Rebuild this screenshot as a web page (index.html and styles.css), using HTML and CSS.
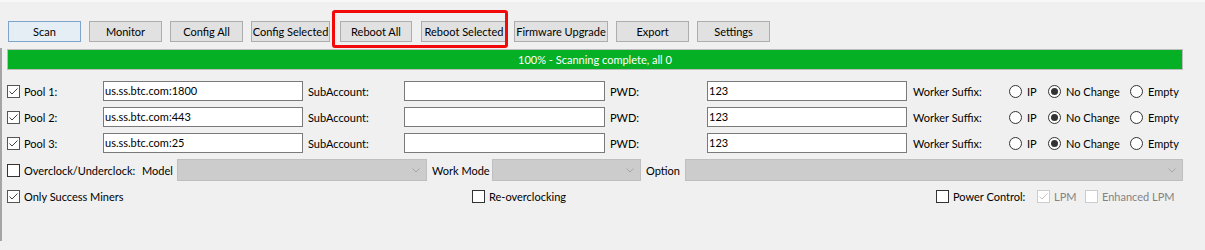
FILE: index.html
```html
<!DOCTYPE html>
<html>
<head>
<meta charset="utf-8">
<link rel="stylesheet" href="styles.css">
</head>
<body>
<div class="topline"></div>
<div class="toolbar">
  <button class="btn btn-focus w73">Scan</button>
  <button class="btn w73">Monitor</button>
  <button class="btn w73">Config All</button>
  <button class="btn w79">Config Selected</button>
  <button class="btn w72 ml10">Reboot All</button>
  <button class="btn w86 ml9">Reboot Selected</button>
  <button class="btn w94 ml7">Firmware Upgrade</button>
  <button class="btn w73">Export</button>
  <button class="btn w73">Settings</button>
</div>
<div class="annot"></div>
<div class="panel">
  <div class="progress">100% - Scanning complete, all 0</div>
  <div class="pools">
    <div class="pool-row">
      <label class="check"><span class="cb on"><svg viewBox="0 0 11 11"><path d="M1.5 5.5L4 8L9.5 2.5"/></svg></span><span class="txt">Pool 1:</span></label>
      <div class="field">us.ss.btc.com:1800</div>
      <span class="lbl">SubAccount:</span>
      <div class="field"></div>
      <span class="lbl">PWD:</span>
      <div class="field">123</div>
      <span class="lbl lbl-ws">Worker Suffix:</span>
      <div class="radios">
        <label class="radio r-ip"><span class="rb"></span><span class="txt">IP</span></label>
        <label class="radio r-nc"><span class="rb on"></span><span class="txt">No Change</span></label>
        <label class="radio"><span class="rb"></span><span class="txt">Empty</span></label>
      </div>
    </div>
    <div class="pool-row">
      <label class="check"><span class="cb on"><svg viewBox="0 0 11 11"><path d="M1.5 5.5L4 8L9.5 2.5"/></svg></span><span class="txt">Pool 2:</span></label>
      <div class="field">us.ss.btc.com:443</div>
      <span class="lbl">SubAccount:</span>
      <div class="field"></div>
      <span class="lbl">PWD:</span>
      <div class="field">123</div>
      <span class="lbl lbl-ws">Worker Suffix:</span>
      <div class="radios">
        <label class="radio r-ip"><span class="rb"></span><span class="txt">IP</span></label>
        <label class="radio r-nc"><span class="rb on"></span><span class="txt">No Change</span></label>
        <label class="radio"><span class="rb"></span><span class="txt">Empty</span></label>
      </div>
    </div>
    <div class="pool-row">
      <label class="check"><span class="cb on"><svg viewBox="0 0 11 11"><path d="M1.5 5.5L4 8L9.5 2.5"/></svg></span><span class="txt">Pool 3:</span></label>
      <div class="field">us.ss.btc.com:25</div>
      <span class="lbl">SubAccount:</span>
      <div class="field"></div>
      <span class="lbl">PWD:</span>
      <div class="field">123</div>
      <span class="lbl lbl-ws">Worker Suffix:</span>
      <div class="radios">
        <label class="radio r-ip"><span class="rb"></span><span class="txt">IP</span></label>
        <label class="radio r-nc"><span class="rb on"></span><span class="txt">No Change</span></label>
        <label class="radio"><span class="rb"></span><span class="txt">Empty</span></label>
      </div>
    </div>
  </div>
  <div class="oc-row">
    <label class="check"><span class="cb"></span><span class="txt">Overclock/Underclock:</span></label>
    <span class="lbl lbl-model">Model</span>
    <div class="combo"><svg class="chev" viewBox="0 0 8 5"><path d="M0.5 0.5L4 4L7.5 0.5"/></svg></div>
    <span class="lbl">Work Mode</span>
    <div class="combo"><svg class="chev" viewBox="0 0 8 5"><path d="M0.5 0.5L4 4L7.5 0.5"/></svg></div>
    <span class="lbl">Option</span>
    <div class="combo"><svg class="chev" viewBox="0 0 8 5"><path d="M0.5 0.5L4 4L7.5 0.5"/></svg></div>
  </div>
  <div class="opt-row">
    <label class="check o1"><span class="cb on"><svg viewBox="0 0 11 11"><path d="M1.5 5.5L4 8L9.5 2.5"/></svg></span><span class="txt">Only Success Miners</span></label>
    <label class="check o2"><span class="cb"></span><span class="txt">Re-overclocking</span></label>
    <label class="check o3"><span class="cb"></span><span class="txt">Power Control:</span></label>
    <label class="check o4 disabled"><span class="cb on"><svg viewBox="0 0 11 11"><path d="M1.5 5.5L4 8L9.5 2.5"/></svg></span><span class="txt">LPM</span></label>
    <label class="check disabled"><span class="cb"></span><span class="txt">Enhanced LPM</span></label>
  </div>
</div>
</body>
</html>
```

FILE: styles.css
```css
* { box-sizing: border-box; }
html, body { margin: 0; padding: 0; }
body {
  width: 1205px;
  height: 250px;
  background: #f0f0f0;
  font-family: Lato, "Noto Sans", sans-serif;
  font-size: 11px;
  color: #000;
  position: relative;
  overflow: hidden;
}
.topline { height: 2px; background: #f8f8f8; }

.toolbar {
  display: flex;
  gap: 8px;
  padding: 19px 0 0 8px;
  height: 40px;
}
.btn {
  height: 21px;
  padding: 0;
  margin: 0;
  border: 1px solid #adadad;
  background: #e1e1e1;
  font: inherit;
  color: #000;
  line-height: 19px;
  text-align: center;
  white-space: nowrap;
}
.btn-focus { border-color: #7ea4cb; background: #e5edf5; }
.w72 { width: 72px; }
.w73 { width: 73px; }
.w79 { width: 79px; }
.w86 { width: 86px; }
.w94 { width: 94px; }
.ml10 { margin-left: 2px; }
.ml9 { margin-left: 1px; }
.ml7 { margin-left: -1px; }

.annot {
  position: absolute;
  left: 332px;
  top: 10px;
  width: 176px;
  height: 38px;
  border: 3px solid #f20a0a;
  border-radius: 3px;
}

.panel {
  margin-top: 6px;
  height: 193px;
  border-left: 2px solid #a5a5a5;
  padding: 1px 0 0 5px;
}
.progress {
  width: 1176px;
  height: 21px;
  background: #06b025;
  border: 1px solid #bcbcbc;
  color: #fff;
  text-align: center;
  line-height: 19px;
}

.pools {
  margin-top: 11px;
  display: flex;
  flex-direction: column;
  gap: 6px;
}
.pool-row {
  display: grid;
  grid-template-columns: 96px 200px 101px 201px 102px 200px 102px auto;
  height: 20px;
  align-items: center;
}
.field {
  height: 20px;
  background: #fff;
  border: 1px solid #7a7a7a;
  padding: 0 1px;
  line-height: 18px;
  white-space: nowrap;
  overflow: hidden;
}
.lbl { padding-left: 5px; white-space: nowrap; }
.lbl-ws { padding-left: 6px; }

.check, .radio {
  display: flex;
  align-items: center;
  white-space: nowrap;
}
.cb {
  width: 13px;
  height: 13px;
  flex: none;
  border: 1px solid #333;
  background: #fff;
  display: block;
}
.cb.on { border-color: #555; }
.cb svg { display: block; width: 11px; height: 11px; }
.cb svg path { fill: none; stroke: #444; stroke-width: 1; }
.check .txt { margin-left: 4px; }
.disabled { color: #838383; }
.disabled .cb { border-color: #cccccc; }
.disabled .cb svg path { stroke: #c4c4c4; }

.radios { display: flex; align-items: center; }
.rb {
  width: 13px;
  height: 13px;
  flex: none;
  border: 1px solid #333;
  border-radius: 50%;
  background: #fff;
  position: relative;
}
.rb.on::after {
  content: "";
  position: absolute;
  left: 2px;
  top: 2px;
  width: 7px;
  height: 7px;
  border-radius: 50%;
  background: #333;
}
.radio .txt { margin-left: 5px; }
.r-ip { width: 39px; }
.r-nc { width: 82px; }

.oc-row {
  margin-top: 6px;
  height: 22px;
  display: grid;
  grid-template-columns: 135px 35px 250px 65px 149px 44px 498px;
  align-items: center;
}
.lbl-model { padding-left: 0; }
.combo {
  height: 22px;
  background: #cccccc;
  border: 1px solid #bfbfbf;
  position: relative;
}
.chev {
  position: absolute;
  right: 6px;
  top: 8px;
  width: 8px;
  height: 5px;
}
.chev path { fill: none; stroke: #a6a6a6; stroke-width: 1; }

.opt-row {
  margin-top: 5px;
  height: 21px;
  display: flex;
  align-items: center;
}
.o1 { width: 465px; }
.o2 { width: 464px; }
.o3 { width: 101px; }
.o4 { width: 48px; }
```
